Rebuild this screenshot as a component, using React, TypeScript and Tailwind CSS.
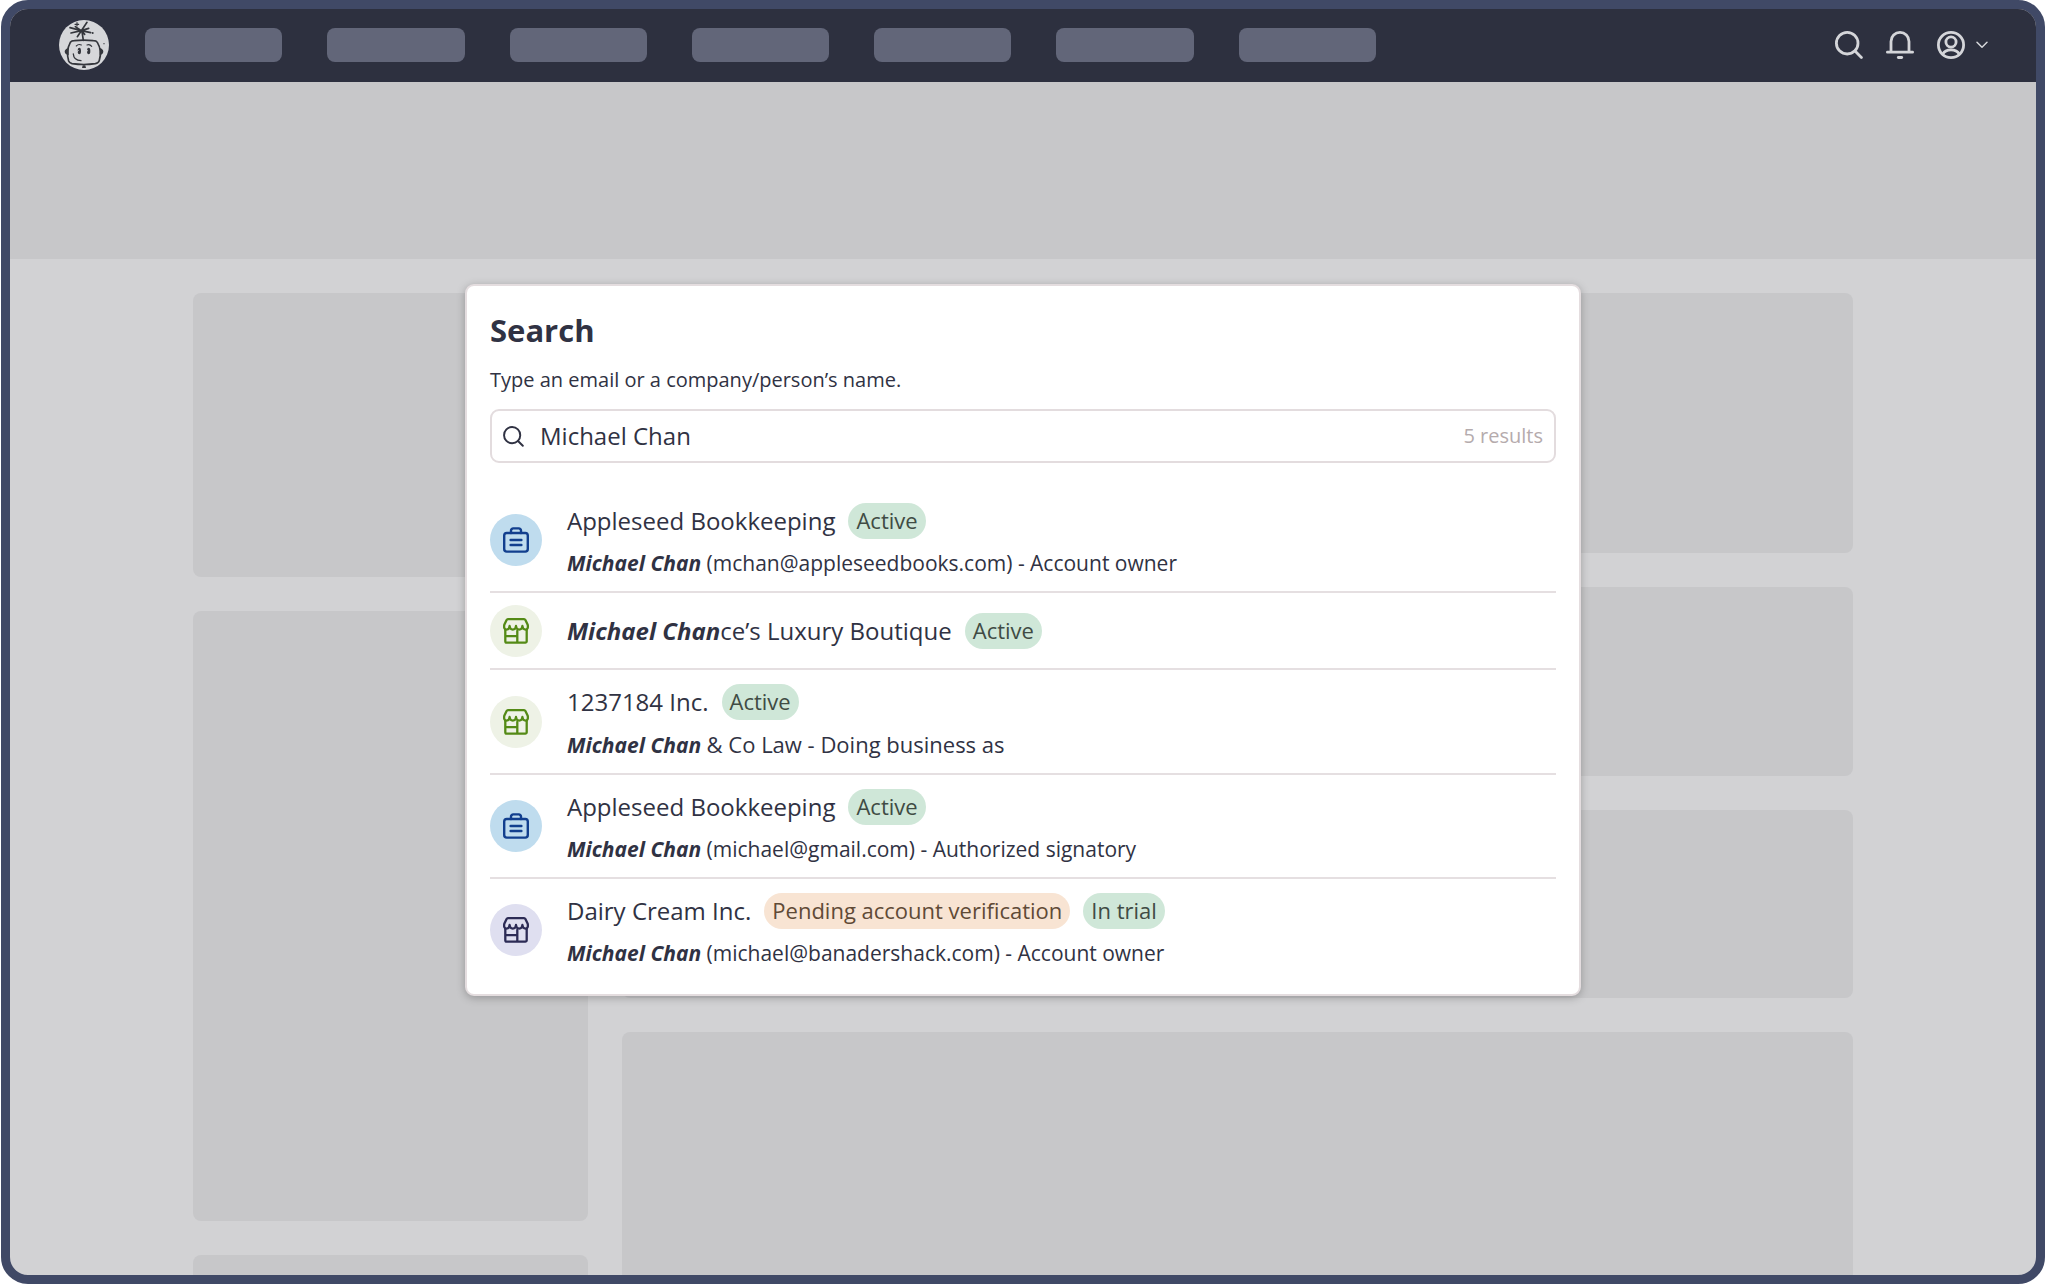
import React, { useState } from 'react';

type Tone = 'green' | 'orange';
type Kind = 'firm' | 'shop' | 'trial';

interface Result {
  kind: Kind;
  match?: string;
  name: string;
  tags: { label: string; tone: Tone }[];
  detail?: string;
  largeDetail?: boolean;
}

const RESULTS: Result[] = [
  {
    kind: 'firm',
    name: 'Appleseed Bookkeeping',
    tags: [{ label: 'Active', tone: 'green' }],
    detail: '(mchan@appleseedbooks.com) - Account owner',
  },
  {
    kind: 'shop',
    match: 'Michael Chan',
    name: 'ce’s Luxury Boutique',
    tags: [{ label: 'Active', tone: 'green' }],
  },
  {
    kind: 'shop',
    name: '1237184 Inc.',
    tags: [{ label: 'Active', tone: 'green' }],
    detail: '& Co Law - Doing business as',
    largeDetail: true,
  },
  {
    kind: 'firm',
    name: 'Appleseed Bookkeeping',
    tags: [{ label: 'Active', tone: 'green' }],
    detail: '(michael@gmail.com) - Authorized signatory',
  },
  {
    kind: 'trial',
    name: 'Dairy Cream Inc.',
    tags: [
      { label: 'Pending account verification', tone: 'orange' },
      { label: 'In trial', tone: 'green' },
    ],
    detail: '(michael@banadershack.com) - Account owner',
  },
];

const KIND_CLASS: Record<Kind, string> = {
  firm: 'bg-[#bfdcee] text-[#123f8e]',
  shop: 'bg-[#eef2e6] text-[#548a16]',
  trial: 'bg-[#dfdff0] text-[#2c2b55]',
};

const TONE_CLASS: Record<Tone, string> = {
  green: 'bg-[#cfe7d8] text-[#404b44]',
  orange: 'bg-[#f8e4d3] text-[#604a36]',
};

function SearchIcon({ className, strokeWidth }: { className: string; strokeWidth: number }) {
  return (
    <svg viewBox="0 0 28 28" className={className} fill="none" stroke="currentColor" strokeWidth={strokeWidth} strokeLinecap="round" aria-hidden="true">
      <circle cx="12.2" cy="12.2" r="10.8" />
      <path d="M20 20l6.400 6.400" />
    </svg>
  );
}

function BellIcon() {
  return (
    <svg viewBox="0 0 28 28" className="size-7" fill="none" stroke="currentColor" strokeWidth="2.8" strokeLinecap="round" aria-hidden="true">
      <path d="M1.4 21.2h25.2M5 21V10.400a9 9 0 0 1 18 0V21" />
      <path d="M12.300 26.500h3.400" />
    </svg>
  );
}

function UserIcon() {
  return (
    <svg viewBox="0 0 28 28" className="size-7" fill="none" stroke="currentColor" strokeWidth="2.8" strokeLinecap="round" aria-hidden="true">
      <circle cx="14" cy="14" r="12.600" />
      <circle cx="14" cy="11" r="5.100" />
      <path d="M5.800 23.200c1.400-2.800 4.600-4.300 8.200-4.300s6.800 1.500 8.200 4.300" />
    </svg>
  );
}

function ChevronIcon() {
  return (
    <svg viewBox="0 0 12 8" className="h-2 w-3" fill="none" stroke="currentColor" strokeWidth="1.500" strokeLinecap="round" strokeLinejoin="round" aria-hidden="true">
      <path d="M1 1.200l5 5 5-5" />
    </svg>
  );
}

function BriefcaseIcon() {
  return (
    <svg viewBox="0 0 26 26" className="size-[26px]" fill="none" stroke="currentColor" strokeWidth="2.400" strokeLinecap="round" strokeLinejoin="round" aria-hidden="true">
      <rect x="1.200" y="6" width="23.600" height="18.600" rx="2.600" />
      <path d="M8 6V3.600a2.200 2.200 0 0 1 2.200-2.200h5.600A2.200 2.200 0 0 1 18 3.600V6M7.600 13h10.800M7.600 18h10.800" />
    </svg>
  );
}

function StoreIcon() {
  return (
    <svg viewBox="0 0 26 26" className="size-[26px]" fill="none" stroke="currentColor" strokeWidth="2.300" strokeLinecap="round" strokeLinejoin="round" aria-hidden="true">
      <path d="M5 1.200h16a1.500 1.500 0 0 1 1.400.9l2.300 4.700c.5 2.400 0 4.800-2 4.800-1.800 0-3.100-1.400-3.300-3.600-.2 2.200-1.400 3.600-3.200 3.600S13.200 10.200 13 8c-.2 2.200-1.400 3.600-3.200 3.600S6.800 10.200 6.600 8c-.2 2.200-1.500 3.600-3.300 3.600-2 0-2.500-2.400-2-4.800l2.300-4.700A1.500 1.500 0 0 1 5 1.200z" />
      <path d="M2.300 12v11.300a1.400 1.400 0 0 0 1.400 1.400h18.600a1.400 1.400 0 0 0 1.400-1.400V12M14.300 24.500V13M2.500 18.200h11.600" />
    </svg>
  );
}

function Logo() {
  return (
    <svg viewBox="178 60 150 150" className="size-[50px]" fill="none" stroke="#34363c" strokeWidth="5" strokeLinecap="round" strokeLinejoin="round" role="img" aria-label="Home">
      <circle cx="253" cy="135" r="75" fill="#d6d7da" stroke="none" />
      <path d="M212 127q4-5 12-5 28-3 57 0 9 0 12 5 15 25 6 54-2 8-12 10-34 5-70 0-8-2-10-8-9-30 5-56z" />
      <path d="M207 144q-12 3-12 11 1 8 12 11zM300 144q11 3 11 11-1 8-11 11z" fill="#34363c" stroke="none" />
      <path d="M251 121l-4-27M245 92l-34-9M245 92l-31 7M245 92l17-25M245 92l22-7M245 92l28 6M245 92l-12 18M245 92l-18-12M245 92l10 11" />
      <path d="M226 73h11M232 68v10" strokeWidth="3.500" />
      <circle cx="279" cy="99" r="3" fill="#34363c" stroke="none" />
      <circle cx="313" cy="131" r="2" fill="#34363c" stroke="none" />
      <path d="M230 138q6-7 15-3M262 135q8-4 14 4" strokeWidth="3.500" />
      <ellipse cx="239" cy="153" rx="5" ry="10" fill="#34363c" stroke="none" />
      <ellipse cx="267" cy="153" rx="5" ry="10" fill="#34363c" stroke="none" />
      <path d="M236 152l-3 2M264 152l-3 2" stroke="#d6d7da" strokeWidth="3" />
      <path d="M221 162q1 19 23 20" strokeWidth="4" />
      <path d="M247 204l2-8h8l2 8z" fill="#34363c" stroke="none" />
    </svg>
  );
}

function Badge({ label, tone }: { label: string; tone: Tone }) {
  return <span className={`flex h-9 items-center rounded-full px-2 pb-0.5 text-[22px] leading-7 ${TONE_CLASS[tone]}`}>{label}</span>;
}

function ResultRow({ result, last }: { result: Result; last: boolean }) {
  return (
    <li
      className={`flex items-center gap-[25px] ${result.detail ? 'pt-3.5 pb-3.5' : 'pt-3 pb-[11px]'} ${last ? '' : 'border-b-2 border-[#e5dfe1]'}`}
    >
      <span className={`flex size-[52px] shrink-0 items-center justify-center rounded-full ${KIND_CLASS[result.kind]}`}>
        {result.kind === 'firm' ? <BriefcaseIcon /> : <StoreIcon />}
      </span>
      <div className="flex flex-col gap-2.5">
        <div className="flex items-center gap-[13px]">
          <h3 className="text-2xl leading-9">
            {result.match && <em className="font-bold">{result.match}</em>}
            {result.name}
          </h3>
          {result.tags.map((t) => (
            <Badge key={t.label} label={t.label} tone={t.tone} />
          ))}
        </div>
        {result.detail && (
          <p className="text-[21px] leading-7">
            <em className="font-bold">Michael Chan</em>{' '}
            <span className={result.largeDetail ? 'text-[22px] leading-7' : ''}>{result.detail}</span>
          </p>
        )}
      </div>
    </li>
  );
}

function SearchDialog() {
  const [query, setQuery] = useState('Michael Chan');
  return (
    <section
      role="dialog"
      aria-labelledby="search-title"
      className="w-[1116px] max-w-full rounded-[9px] border-2 border-[#e4dddf] bg-white px-[23px] pt-6 pb-[13px] shadow-[0_2px_8px_rgba(0,0,0,0.25)]"
    >
      <h2 id="search-title" className="text-[31px] leading-10 font-bold">Search</h2>
      <label htmlFor="search-query" className="mt-4 block text-[20px] leading-7">
        Type an email or a company/person’s name.
      </label>
      <div className="mt-[15px] flex h-[54px] items-center rounded-[9px] border-2 border-[#e3dcde] px-[11px]">
        <SearchIcon className="size-[21px] shrink-0" strokeWidth={2.6} />
        <input
          id="search-query"
          type="text"
          value={query}
          onChange={(e) => setQuery(e.target.value)}
          className="ml-4 min-w-0 flex-1 bg-transparent text-2xl leading-9 outline-none"
        />
        <output htmlFor="search-query" className="text-[20px] leading-7 text-[#b5abad]">5 results</output>
      </div>
      <ul className="mt-[26px]">
        {RESULTS.map((r, i) => (
          <ResultRow key={i} result={r} last={i === RESULTS.length - 1} />
        ))}
      </ul>
    </section>
  );
}

export default function App() {
  return (
    <div className="h-screen bg-white pl-px font-['Open_Sans',sans-serif] text-[#303243]">
      <div className="relative flex h-full flex-col overflow-hidden rounded-[27px] border-[9px] border-[#404966] bg-[#d2d2d4]">
        <header className="flex h-[73px] shrink-0 items-center bg-[#2d303f] pr-12 pb-0.5 pl-[49px] text-[#d4d5d9]">
          <Logo />
          <nav aria-label="Main" className="ml-9 grid w-[1231px] grid-cols-7 gap-[45px]">
            {[0, 1, 2, 3, 4, 5, 6].map((n) => (
              <span key={n} className="h-[34px] rounded-lg bg-[#626679]" />
            ))}
          </nav>
          <div className="ml-auto flex items-center gap-[23px]">
            <button type="button" aria-label="Search">
              <SearchIcon className="size-7" strokeWidth={2.8} />
            </button>
            <button type="button" aria-label="Notifications">
              <BellIcon />
            </button>
            <button type="button" aria-label="Account" className="flex items-center gap-[11px]">
              <UserIcon />
              <ChevronIcon />
            </button>
          </div>
        </header>

        <div className="h-[177px] shrink-0 bg-[#c7c7c9]" />

        <main className="grid min-h-0 flex-1 grid-cols-[395px_1fr] gap-[34px] px-[183px] pt-[34px]">
          <div className="flex min-h-0 flex-col gap-[34px]">
            <div className="h-[284px] shrink-0 rounded-lg bg-[#c7c7c9]" />
            <div className="h-[610px] shrink-0 rounded-lg bg-[#c7c7c9]" />
            <div className="flex-1 rounded-t-lg bg-[#c7c7c9]" />
          </div>
          <div className="flex min-h-0 flex-col gap-[34px]">
            <div className="h-[260px] shrink-0 rounded-lg bg-[#c7c7c9]" />
            <div className="h-[189px] shrink-0 rounded-lg bg-[#c7c7c9]" />
            <div className="h-[188px] shrink-0 rounded-lg bg-[#c7c7c9]" />
            <div className="flex-1 rounded-t-lg bg-[#c7c7c9]" />
          </div>
        </main>

        <div className="absolute inset-x-0 top-[275px] flex justify-center">
          <SearchDialog />
        </div>
      </div>
    </div>
  );
}
